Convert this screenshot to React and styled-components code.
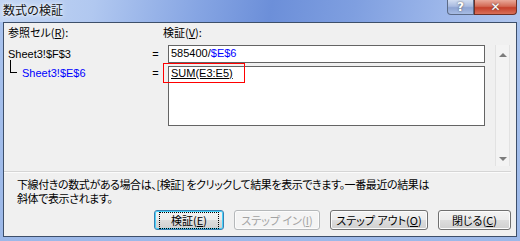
import styled, { createGlobalStyle } from "styled-components";

const GlobalStyle = createGlobalStyle`
  html, body {
    margin: 0;
    padding: 0;
    background: #ffffff;
  }
  body {
    font-family: "Liberation Sans", "Noto Sans CJK JP", sans-serif;
    font-size: 11px;
  }
`;

const Frame = styled.div`
  width: 520px;
  height: 241px;
  display: flex;
  flex-direction: column;
  background: linear-gradient(180deg, #a9c3ee 0%, #9cb8e8 100%);
  overflow: hidden;
`;

const TitleBar = styled.div`
  height: 22px;
  flex-shrink: 0;
  display: flex;
  align-items: flex-start;
  justify-content: space-between;
  padding: 0 3px 0 3px;
  background: linear-gradient(
    100deg,
    #c2d5f3 0%,
    #b1c8f0 18%,
    #86a5e3 38%,
    #6c8fd9 52%,
    #7f9fe0 68%,
    #9db7ea 85%,
    #b0c6ee 100%
  );
`;

const Title = styled.span`
  font-family: "Noto Sans CJK JP", sans-serif;
  font-size: 12px;
  line-height: 20px;
  color: #111;
  text-shadow: 0 0 6px #ffffff, 0 0 3px #ffffff;
`;

const Caption = styled.div`
  display: flex;
`;

const CaptionButton = styled.div`
  width: ${(p) => p.$w}px;
  height: 15px;
  box-sizing: border-box;
  display: flex;
  align-items: center;
  justify-content: center;
  border: 1px solid ${(p) => (p.$close ? "#6e3127" : "#5b6a86")};
  border-top: none;
  border-radius: ${(p) => (p.$close ? "0 0 4px 0" : "0 0 0 4px")};
  background: ${(p) =>
    p.$close
      ? "linear-gradient(180deg, #e9a99a 0%, #d36a55 45%, #c5402b 55%, #d8705a 100%)"
      : "linear-gradient(180deg, #d2ddf1 0%, #a9bbe0 45%, #8ea4d2 55%, #a7bce4 100%)"};
  color: #fff;
  font-family: "DejaVu Sans", sans-serif;
  font-weight: bold;
  font-size: 12px;
  text-shadow: 0 0 2px #444;
`;

const Client = styled.div`
  flex: 1;
  margin: 0 3px 4px 3px;
  border: 1px solid #3d4f6a;
  background: #f0f0f0;
  display: flex;
  flex-direction: column;
  color: #000;
`;

const Top = styled.div`
  display: flex;
  align-items: flex-start;
  padding: 2px 5px 0 4px;
`;

const Grid = styled.div`
  display: grid;
  grid-template-columns: 140px 15px 322px;
  grid-template-rows: 14px 18px 60px;
  row-gap: 6px;
`;

const Label = styled.div`
  font-family: "Noto Sans CJK JP", sans-serif;
  font-feature-settings: "palt";
  line-height: 14px;
  grid-column: ${(p) => p.$col};
`;

const Key = styled.span`
  text-decoration: underline;
  text-underline-offset: 1px;
`;

const RefCell = styled.div`
  display: flex;
  align-items: flex-start;
  line-height: 14px;
  padding-top: ${(p) => (p.$sub ? 0 : 2)}px;
  margin-top: ${(p) => (p.$sub ? -3 : 0)}px;
  padding-left: ${(p) => (p.$sub ? 2 : 0)}px;
  color: ${(p) => (p.$sub ? "#0000ff" : "#000")};
`;

const Tree = styled.span`
  width: 6px;
  height: 12px;
  margin-top: -6px;
  margin-right: 5px;
  border-left: 1px solid #000;
  border-bottom: 1px solid #000;
  flex-shrink: 0;
`;

const Equals = styled.div`
  line-height: 14px;
  padding-top: ${(p) => (p.$sub ? 0 : 2)}px;
  margin-top: ${(p) => (p.$sub ? -3 : 0)}px;
  text-align: center;
`;

const Box = styled.div`
  position: relative;
  margin-left: 5px;
  box-sizing: border-box;
  height: ${(p) => p.$h}px;
  margin-top: ${(p) => (p.$sub ? -3 : 0)}px;
  border: 1px solid #646464;
  background: #ffffff;
  padding: 0 2px;
  line-height: ${(p) => (p.$sub ? 13 : 15)}px;
`;

const Blue = styled.span`
  color: #0000ff;
`;

const Formula = styled.span`
  text-decoration: underline;
  text-underline-offset: 1px;
`;

const Highlight = styled.div`
  position: absolute;
  z-index: 2;
  left: -6px;
  top: -4px;
  width: 82px;
  height: 20px;
  box-sizing: border-box;
  border: 1px solid #ff0000;
  pointer-events: none;
`;

const ScrollBar = styled.div`
  width: 15px;
  height: 121px;
  margin: 20px 0 0 10px;
  box-sizing: border-box;
  border-left: 1px solid #e2e2e2;
  border-right: 1px solid #e2e2e2;
  background: #f3f3f3;
  display: flex;
  flex-direction: column;
  justify-content: space-between;
  align-items: center;
  padding: 8px 0 5px 0;
`;

const Arrow = styled.span`
  width: 0;
  height: 0;
  border-left: 4px solid transparent;
  border-right: 4px solid transparent;
  ${(p) =>
    p.$down ? "border-top: 4px solid #7c7c7c;" : "border-bottom: 4px solid #7c7c7c;"}
`;

const Separator = styled.div`
  margin: 5px 5px 0 0;
  height: 1px;
  background: #d5d5d5;
  border-bottom: 1px solid #fbfbfb;
`;

const Message = styled.div`
  margin-top: 4px;
  padding-left: 13px;
  font-family: "Noto Sans CJK JP", sans-serif;
  font-feature-settings: "palt";
  font-size: 11px;
  letter-spacing: -0.4px;
  line-height: 14px;
`;

const Line = styled.div`
  height: 14px;
  white-space: nowrap;
`;

const Buttons = styled.div`
  display: flex;
  justify-content: flex-end;
  gap: 10px;
  padding-right: 5px;
  margin-top: 5px;
`;

const Button = styled.div`
  width: ${(p) => p.$w}px;
  height: 20px;
  box-sizing: border-box;
  display: flex;
  align-items: center;
  justify-content: center;
  border: 1px solid
    ${(p) => (p.$default ? "#3c7fb1" : p.$disabled ? "#b5b8ba" : "#707070")};
  border-radius: 3px;
  background: ${(p) =>
    p.$disabled
      ? "#f4f4f4"
      : "linear-gradient(180deg, #f3f3f3 0%, #ececec 48%, #dddddd 52%, #d0d0d0 100%)"};
  box-shadow: ${(p) =>
    p.$default ? "inset 0 0 0 1px #48d4fb" : "inset 0 0 0 1px #fcfcfc"};
  color: ${(p) => (p.$disabled ? "#a3a3a3" : "#000")};
  font-family: "Noto Sans CJK JP", sans-serif;
  font-feature-settings: "palt";
  font-size: 11px;
  line-height: 13px;
`;

const Focus = styled.span`
  padding: 0 10px;
  outline: 1px dotted #000;
  outline-offset: 1px;
`;

export default function App() {
  return (
    <>
      <GlobalStyle />
      <Frame>
        <TitleBar>
          <Title>数式の検証</Title>
          <Caption>
            <CaptionButton $w={27}>?</CaptionButton>
            <CaptionButton $w={43} $close>
              ✕
            </CaptionButton>
          </Caption>
        </TitleBar>
        <Client>
          <Top>
            <Grid>
              <Label $col={1}>
                参照セル(<Key>R</Key>):
              </Label>
              <Label $col={3}>
                検証(<Key>V</Key>):
              </Label>
              <RefCell>Sheet3!$F$3</RefCell>
              <Equals>=</Equals>
              <Box $h={18}>
                585400/<Blue>$E$6</Blue>
              </Box>
              <RefCell $sub>
                <Tree />
                Sheet3!$E$6
              </RefCell>
              <Equals $sub>=</Equals>
              <Box $h={60} $sub>
                <Formula>SUM(E3:E5)</Formula>
                <Highlight />
              </Box>
            </Grid>
            <ScrollBar>
              <Arrow />
              <Arrow $down />
            </ScrollBar>
          </Top>
          <Separator />
          <Message>
            <Line>
              下線付きの数式がある場合は、[検証] をクリックして結果を表示できます。一番最近の結果は
            </Line>
            <Line>斜体で表示されます。</Line>
          </Message>
          <Buttons>
            <Button $w={70} $default>
              <Focus>
                検証(<Key>E</Key>)
              </Focus>
            </Button>
            <Button $w={86} $disabled>
              ステップ イン(<Key>I</Key>)
            </Button>
            <Button $w={98}>
              ステップ アウト(<Key>O</Key>)
            </Button>
            <Button $w={73}>
              閉じる(<Key>C</Key>)
            </Button>
          </Buttons>
        </Client>
      </Frame>
    </>
  );
}
